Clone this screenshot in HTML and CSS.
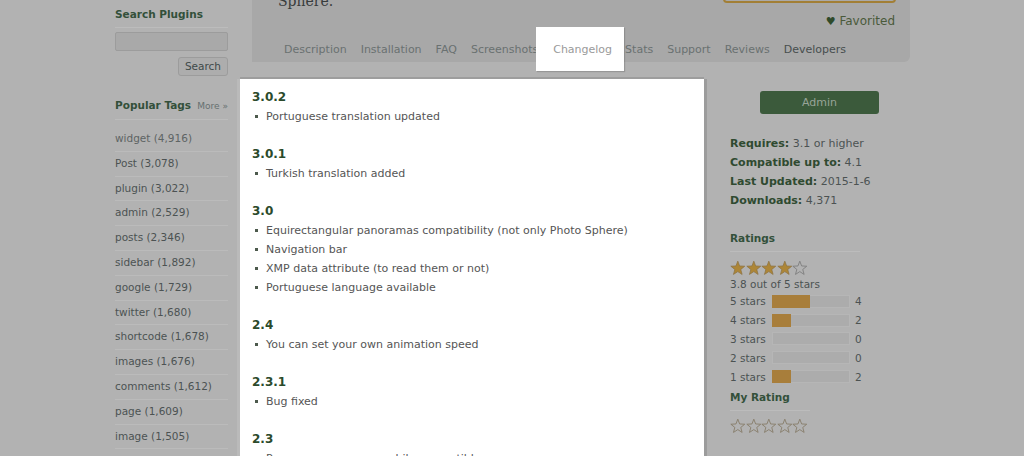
FILE: index.html
```html
<!DOCTYPE html>
<html lang="en">
<head>
<meta charset="utf-8">
<title>Changelog</title>
<link rel="stylesheet" href="styles.css">
</head>
<body>
<svg class="defs" width="0" height="0" aria-hidden="true">
  <defs>
    <symbol id="star" viewBox="0 0 16 16">
      <polygon points="8,1 9.88,5.91 15.13,6.18 11.04,9.49 12.41,14.57 8,11.7 3.59,14.57 4.96,9.49 0.87,6.18 6.12,5.91"/>
    </symbol>
  </defs>
</svg>
<div class="page">
  <aside class="left">
    <h3 class="side-h">Search Plugins</h3>
    <div class="search-input"></div>
    <div class="search-btn-row"><span class="search-btn">Search</span></div>
    <h3 class="side-h tags-h"><span>Popular Tags</span><span class="more">More »</span></h3>
    <ul class="tags">
      <li class="visited">widget (4,916)</li>
      <li>Post (3,078)</li>
      <li>plugin (3,022)</li>
      <li>admin (2,529)</li>
      <li>posts (2,346)</li>
      <li>sidebar (1,892)</li>
      <li>google (1,729)</li>
      <li>twitter (1,680)</li>
      <li>shortcode (1,678)</li>
      <li>images (1,676)</li>
      <li>comments (1,612)</li>
      <li>page (1,609)</li>
      <li>image (1,505)</li>
    </ul>
  </aside>
  <main class="main">
    <header class="plugin-head">
      <div class="head-top">
        <p class="desc">Sphere.</p>
        <div class="actions">
          <div class="dl-btn"></div>
          <div class="fav"><span class="heart">♥</span> Favorited</div>
        </div>
      </div>
      <nav class="tabs">
        <span class="tab">Description</span>
        <span class="tab">Installation</span>
        <span class="tab">FAQ</span>
        <span class="tab">Screenshots</span>
        <span class="tab active">Changelog</span>
        <span class="tab">Stats</span>
        <span class="tab">Support</span>
        <span class="tab">Reviews</span>
        <span class="tab dev">Developers</span>
      </nav>
    </header>
    <div class="body-row">
      <section class="panel">
        <h4>3.0.2</h4>
        <ul><li>Portuguese translation updated</li></ul>
        <h4>3.0.1</h4>
        <ul><li>Turkish translation added</li></ul>
        <h4>3.0</h4>
        <ul>
          <li>Equirectangular panoramas compatibility (not only Photo Sphere)</li>
          <li>Navigation bar</li>
          <li>XMP data attribute (to read them or not)</li>
          <li>Portuguese language available</li>
        </ul>
        <h4>2.4</h4>
        <ul><li>You can set your own animation speed</li></ul>
        <h4>2.3.1</h4>
        <ul><li>Bug fixed</li></ul>
        <h4>2.3</h4>
        <ul><li>Panoramas are now mobile-compatible</li></ul>
      </section>
      <aside class="right">
        <div class="admin-btn">Admin</div>
        <ul class="meta">
          <li><b>Requires:</b> 3.1 or higher</li>
          <li><b>Compatible up to:</b> 4.1</li>
          <li><b>Last Updated:</b> 2015-1-6</li>
          <li><b>Downloads:</b> 4,371</li>
        </ul>
        <h3 class="side-h r-h">Ratings</h3>
        <div class="stars">
          <svg class="st full"><use href="#star"/></svg><svg class="st full"><use href="#star"/></svg><svg class="st full"><use href="#star"/></svg><svg class="st full"><use href="#star"/></svg><svg class="st empty"><use href="#star"/></svg>
        </div>
        <div class="avg">3.8 out of 5 stars</div>
        <div class="bars">
          <div class="bar-row"><span>5 stars</span><span class="bar"><span class="fill" style="width:50%"></span></span><span>4</span></div>
          <div class="bar-row"><span>4 stars</span><span class="bar"><span class="fill" style="width:25%"></span></span><span>2</span></div>
          <div class="bar-row"><span>3 stars</span><span class="bar"><span class="fill" style="width:0%"></span></span><span>0</span></div>
          <div class="bar-row"><span>2 stars</span><span class="bar"><span class="fill" style="width:0%"></span></span><span>0</span></div>
          <div class="bar-row"><span>1 stars</span><span class="bar"><span class="fill" style="width:25%"></span></span><span>2</span></div>
        </div>
        <h3 class="side-h my-h">My Rating</h3>
        <div class="stars my">
          <svg class="st outline"><use href="#star"/></svg><svg class="st outline"><use href="#star"/></svg><svg class="st outline"><use href="#star"/></svg><svg class="st outline"><use href="#star"/></svg><svg class="st outline"><use href="#star"/></svg>
        </div>
      </aside>
    </div>
  </main>
</div>
</body>
</html>
```

FILE: styles.css
```css
* { box-sizing: border-box; }
html, body { margin: 0; height: 100%; overflow: hidden; }
body {
  background: #b2b2b2;
  font-family: "DejaVu Sans", Verdana, sans-serif;
  font-size: 11px;
  color: #4c5252;
}
.defs { position: absolute; }
ul { list-style: none; margin: 0; padding: 0; }

.page {
  display: flex;
  gap: 12px;
  padding-left: 115px;
}

/* left sidebar */
.left { width: 113px; flex: none; font-size: 10.5px; }
.side-h {
  margin: 0;
  font-size: 10.5px;
  font-weight: bold;
  color: #33503a;
  line-height: 20px;
  padding: 4px 0 3px;
  border-bottom: 1px solid #bcbcbc;
}
.search-input {
  margin-top: 4px;
  height: 19px;
  background: #a9a9a9;
  border: 1px solid #9c9c9c;
  border-radius: 2px;
}
.search-btn-row { display: flex; justify-content: flex-end; margin-top: 6px; }
.search-btn {
  width: 50px;
  height: 19px;
  line-height: 17px;
  text-align: center;
  border: 1px solid #9c9c9c;
  border-radius: 3px;
  background: #adadad;
  color: #3f4a4a;
}
.tags-h {
  margin-top: 15px;
  display: flex;
  justify-content: space-between;
  align-items: baseline;
}
.more { font-weight: normal; font-size: 9px; color: #667070; }
.tags { margin-top: 7px; }
.tags li {
  line-height: 23.8px;
  border-bottom: 1px solid #bbbbbb;
  color: #4c5252;
}
.tags li.visited { color: #5e6464; }

/* main */
.main { width: 670px; flex: none; }
.plugin-head {
  margin-left: 12px;
  height: 62px;
  background: #a8a8a8;
  border-radius: 0 0 6px 0;
  display: flex;
  flex-direction: column;
}
.head-top {
  height: 37px;
  display: flex;
  justify-content: space-between;
  padding: 0 14px 0 26px;
}
.desc {
  margin: -9px 0 0;
  font-family: "DejaVu Serif", Georgia, serif;
  font-size: 14px;
  line-height: 20px;
  color: #383c3c;
}
.actions { display: flex; flex-direction: column; align-items: flex-end; }
.dl-btn {
  width: 173px;
  height: 14px;
  margin-top: -11px;
  background: #a9a9a9;
  border: 2px solid #a27f36;
  border-radius: 4px;
}
.fav {
  margin-top: 10px;
  line-height: 16px;
  font-size: 12px;
  color: #4a5a3a;
  padding-right: 1px;
}
.heart { color: #2f4a2a; font-size: 11px; }

.tabs {
  display: flex;
  padding-left: 25px;
  height: 25px;
}
.tab {
  padding: 0 7px;
  line-height: 25px;
  color: #6a7171;
}
.tab.dev { color: #474e4e; }
.tab.active {
  position: relative;
  isolation: isolate;
  background: #f4f4f4;
  color: #9a9a9a;
  padding: 0 6px 0 8px;
}
.tab.active::before {
  content: "";
  position: absolute;
  top: -10px;
  bottom: -9px;
  left: -9px;
  right: -6px;
  background: #fff;
  box-shadow: 1px 1px 1px rgba(0,0,0,0.15);
  z-index: -1;
}

.body-row { display: flex; margin-top: 17px; }

.panel {
  width: 464px;
  height: 377px;
  overflow: hidden;
  background: #fff;
  padding: 9px 12px 0;
  box-shadow: 0 -2px 0 #9d9d9d, 3px 0 0 #9c9c9c, -3px 0 0 #bababa;
  color: #555;
}
.panel h4 {
  margin: 0;
  font-size: 12px;
  font-weight: bold;
  line-height: 19px;
  color: #2b4a2b;
}
.panel ul { margin-bottom: 19px; }
.panel li {
  position: relative;
  line-height: 19px;
  padding-left: 14px;
}
.panel li::before {
  content: "";
  position: absolute;
  left: 3px;
  top: 8px;
  width: 3px;
  height: 3px;
  background: #4d5a4d;
}

/* right sidebar */
.right { width: 179px; margin-left: 26px; flex: none; }
.admin-btn {
  margin: 12px 0 0 30px;
  width: 119px;
  height: 23px;
  line-height: 23px;
  border-radius: 3px;
  background: #3b5a3b;
  color: #98a498;
  text-align: center;
}
.meta { margin-top: 20px; }
.meta li { line-height: 19px; color: #4c5252; }
.meta b { color: #2f4a30; }
.r-h { margin-top: 14px; width: 130px; }
.stars { display: flex; margin-top: 8px; height: 16px; }
.st { width: 15.6px; height: 16px; }
.st.full { fill: #ad8637; stroke: #8e7444; stroke-width: 0.8; }
.st.empty { fill: none; stroke: #7d7d7d; stroke-width: 0.9; }
.st.outline { fill: none; stroke: #867c68; stroke-width: 0.9; }
.avg { font-size: 10.5px; line-height: 16px; color: #4c5252; }
.bar-row {
  display: grid;
  grid-template-columns: 38px 78px 1fr;
  column-gap: 4px;
  align-items: center;
  height: 18.8px;
  font-size: 10.5px;
  color: #4c5252;
}
.bar-row > span:last-child { padding-left: 1px; }
.bar {
  height: 13px;
  background: #acacac;
  border: 1px solid #b6b6b6;
  display: block;
}
.fill { display: block; background: #a87e3b; margin: -1px 0 0 -1px; height: 13px; }
.my-h { padding-top: 1px; width: 80px; }
.stars.my { margin-top: 7px; }
```
